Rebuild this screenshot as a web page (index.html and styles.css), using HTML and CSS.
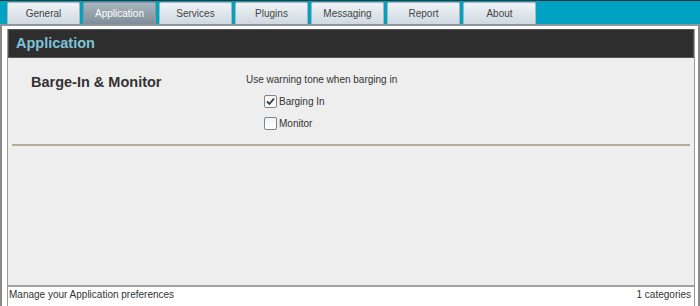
FILE: index.html
```html
<!DOCTYPE html>
<html lang="en">
<head>
    <meta charset="UTF-8">
    <title>Preferences - Application</title>
    <link rel="stylesheet" href="styles.css">
</head>
<body>
    <div class="frame">
        <div class="tabbar">
            <div class="tab">General</div>
            <div class="tab active">Application</div>
            <div class="tab">Services</div>
            <div class="tab">Plugins</div>
            <div class="tab">Messaging</div>
            <div class="tab">Report</div>
            <div class="tab">About</div>
        </div>
        <div class="main">
            <div class="panel">
                <div class="panel-title">Application</div>
                <div class="panel-body">
                    <div class="category">
                        <div class="category-name">Barge-In &amp; Monitor</div>
                        <div class="category-options">
                            <div class="option-label">Use warning tone when barging in</div>
                            <label class="check">
                                <span class="box"><svg width="9" height="9" viewBox="0 0 9 9"><path d="M1 4.5 L3.5 7 L8 1.5" fill="none" stroke="#2a3a4a" stroke-width="1.8"/></svg></span>
                                Barging In
                            </label>
                            <label class="check">
                                <span class="box"></span>
                                Monitor
                            </label>
                        </div>
                    </div>
                    <div class="divider"></div>
                </div>
                <div class="footer">
                    <span>Manage your Application preferences</span>
                    <span>1 categories</span>
                </div>
            </div>
        </div>
    </div>
</body>
</html>
```

FILE: styles.css
```css
body {
    margin: 0;
    font-family: "Liberation Sans", Arial, sans-serif;
    font-size: 10px;
    color: #333;
    background-color: white;
}
.frame {
    width: 700px;
    height: 306px;
    display: flex;
    flex-direction: column;
}
.tabbar {
    background-color: #00a2c1;
    border-top: 1px solid #333;
    border-bottom: 2px solid #8b979d;
    height: 26px;
    box-sizing: border-box;
    padding-left: 7px;
    display: flex;
    align-items: flex-end;
    gap: 3px;
}
.tab {
    width: 71px;
    height: 21px;
    border: 1px solid #a8b6bf;
    border-bottom: none;
    border-radius: 2px 2px 0 0;
    background: linear-gradient(#eff3f6, #cfd9e0);
    color: #444;
    font-size: 10px;
    display: flex;
    align-items: center;
    justify-content: center;
}
.tab.active {
    background: linear-gradient(#a9b5be, #7f8d98);
    border-color: #8b979d;
    color: white;
}
.main {
    flex: 1;
    display: flex;
    border-left: 2px solid #8a8a8a;
    border-right: 2px solid #8a8a8a;
    padding: 3px 3px 0 5px;
}
.panel {
    flex: 1;
    display: flex;
    flex-direction: column;
    border-left: 1px solid #999;
    border-right: 1px solid #999;
}
.panel-title {
    background-color: #2e2e2e;
    border: 1px solid #555;
    height: 29px;
    box-sizing: border-box;
    padding-left: 7px;
    padding-bottom: 1px;
    display: flex;
    align-items: center;
    color: #7ec3da;
    font-weight: bold;
    font-size: 14.5px;
}
.panel-body {
    flex: 1;
    background-color: #eeeeee;
    border-bottom: 2px solid #a0a0a0;
    padding: 16px 4px 0 4px;
}
.category {
    display: flex;
    padding-bottom: 10px;
}
.category-name {
    width: 215px;
    padding-left: 19px;
    font-weight: bold;
    font-size: 14.5px;
    color: #333;
}
.category-options {
    display: flex;
    flex-direction: column;
    font-size: 10px;
    color: #333;
}
.option-label {
    margin-bottom: 5px;
}
.check {
    display: flex;
    align-items: center;
    gap: 2px;
    margin-left: 18px;
    height: 22px;
}
.box {
    width: 11px;
    height: 11px;
    border: 1px solid #7a8590;
    border-radius: 2px;
    background: linear-gradient(#f4f4f4, #ffffff);
    display: flex;
    align-items: center;
    justify-content: center;
}
.divider {
    height: 2px;
    background-color: #b4ad95;
}
.footer {
    height: 19px;
    display: flex;
    justify-content: space-between;
    align-items: flex-start;
    padding: 2px 3px 0 1px;
    box-sizing: border-box;
    font-size: 10px;
    color: #333;
}
```
